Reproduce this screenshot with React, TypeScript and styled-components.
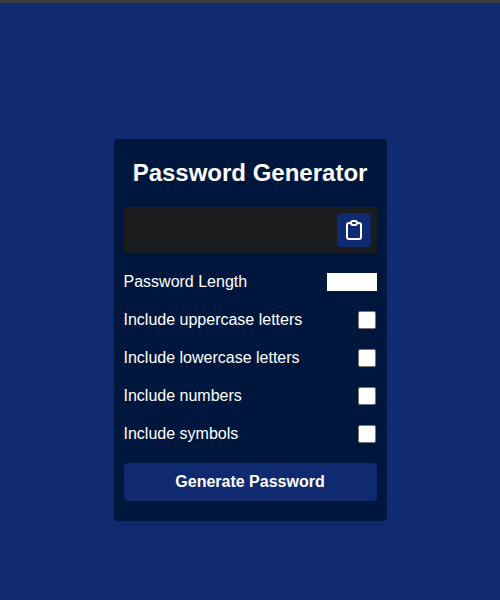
import React, { useState } from "react";
import styled, { createGlobalStyle } from "styled-components";

const GlobalStyle = createGlobalStyle`
  * { box-sizing: border-box; }
  body {
    margin: 0;
    background: #0f2a71;
    color: #fff;
    font-family: "Liberation Sans", Arial, sans-serif;
    font-size: 16px;
  }
`;

const Page = styled.main`
  height: 100vh;
  border-top: 3px solid #3c3c3c;
  padding-top: 136px;
`;

const Card = styled.section`
  width: 273px;
  height: 382px;
  margin: 0 auto;
  padding: 20px 10px;
  background: #00173d;
  border-radius: 4px;
`;

const Title = styled.h1`
  margin: 0 0 20px;
  font-size: 24px;
  line-height: 28px;
  text-align: center;
  white-space: nowrap;
`;

const Result = styled.div`
  display: flex;
  align-items: center;
  justify-content: flex-end;
  height: 46px;
  padding: 6px;
  background: #1b1c1d;
`;

const CopyButton = styled.button`
  display: flex;
  align-items: center;
  justify-content: center;
  width: 34px;
  height: 34px;
  padding: 0;
  border: 0;
  border-radius: 4px;
  background: #0f2a71;
  color: #fff;
`;

const Settings = styled.div`
  display: grid;
  gap: 20px;
  margin: 20px 0;
`;

const Setting = styled.label`
  display: flex;
  align-items: center;
  justify-content: space-between;
  height: 18px;
`;

const LengthInput = styled.input`
  width: 50px;
  height: 18px;
  padding: 0 2px;
  border: 0;
  background: #fff;
  color: #000;
`;

const Checkbox = styled.input`
  appearance: none;
  width: 18px;
  height: 18px;
  margin: 0 1px 0 0;
  border: 1px solid #767676;
  border-radius: 2px;
  background: #fff;
  &:checked { box-shadow: inset 0 0 0 4px #fff; background: #0f2a71; }
`;

const GenerateButton = styled.button`
  width: 100%;
  height: 38px;
  padding: 0;
  border: 0;
  border-radius: 4px;
  background: #0f2a71;
  color: #fff;
  font: bold 16px "Liberation Sans", Arial, sans-serif;
`;

const ClipboardIcon = () => (
  <svg
    width="24"
    height="24"
    viewBox="0 0 24 24"
    fill="none"
    stroke="currentColor"
    strokeWidth="2"
    strokeLinecap="round"
    strokeLinejoin="round"
  >
    <path d="M9 5H7a2 2 0 0 0-2 2v12a2 2 0 0 0 2 2h10a2 2 0 0 0 2-2V7a2 2 0 0 0-2-2h-2" />
    <rect x="9" y="3" width="6" height="4" rx="2" />
  </svg>
);

const options = ["uppercase letters", "lowercase letters", "numbers", "symbols"];

export default function App() {
  const [length, setLength] = useState("");
  return (
    <>
      <GlobalStyle />
      <Page>
        <Card>
          <Title>Password Generator</Title>
          <Result>
            <CopyButton aria-label="Copy password"><ClipboardIcon /></CopyButton>
          </Result>
          <Settings>
            <Setting>
              Password Length
              <LengthInput value={length} onChange={(e) => setLength(e.target.value)} />
            </Setting>
            {options.map((option) => (
              <Setting key={option}>
                Include {option}
                <Checkbox type="checkbox" />
              </Setting>
            ))}
          </Settings>
          <GenerateButton>Generate Password</GenerateButton>
        </Card>
      </Page>
    </>
  );
}
